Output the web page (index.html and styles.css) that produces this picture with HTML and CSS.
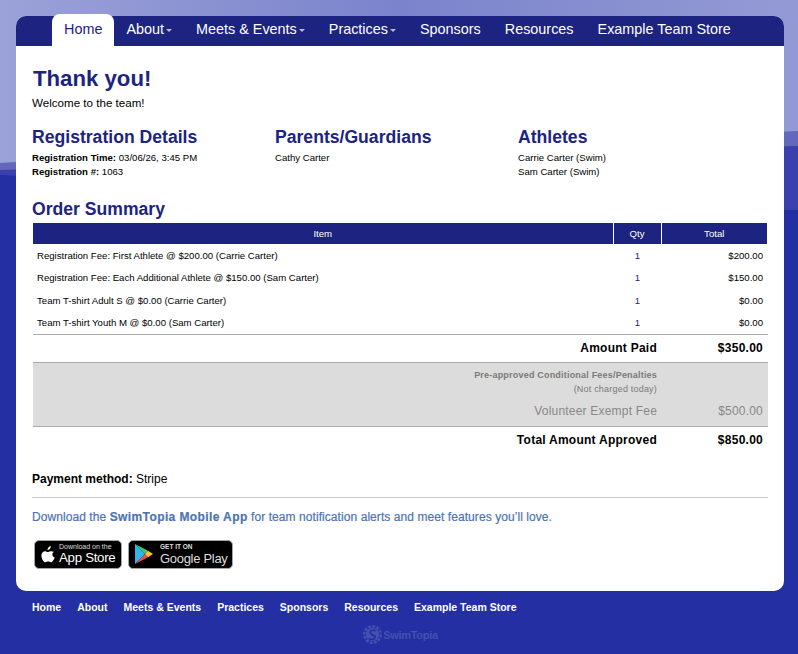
FILE: index.html
```html
<!DOCTYPE html>
<html lang="en">
<head>
<meta charset="utf-8">
<title>Thank you!</title>
<link rel="stylesheet" href="styles.css">
</head>
<body>
<div class="card">
  <nav class="topnav">
    <a class="tab active">Home</a>
    <a class="tab">About<span class="caret"></span></a>
    <a class="tab">Meets &amp; Events<span class="caret"></span></a>
    <a class="tab">Practices<span class="caret"></span></a>
    <a class="tab">Sponsors</a>
    <a class="tab">Resources</a>
    <a class="tab">Example Team Store</a>
  </nav>
  <main class="content">
    <h1 class="title">Thank you!</h1>
    <p class="welcome">Welcome to the team!</p>
    <section class="columns">
      <div>
        <h2 class="heading">Registration Details</h2>
        <p class="line"><b>Registration Time:</b> 03/06/26, 3:45 PM</p>
        <p class="line"><b>Registration #:</b> 1063</p>
      </div>
      <div>
        <h2 class="heading">Parents/Guardians</h2>
        <p class="line">Cathy Carter</p>
      </div>
      <div>
        <h2 class="heading">Athletes</h2>
        <p class="line">Carrie Carter (Swim)</p>
        <p class="line">Sam Carter (Swim)</p>
      </div>
    </section>
    <h2 class="heading order-heading">Order Summary</h2>
    <table class="order">
      <colgroup><col class="col-item"><col class="col-qty"><col class="col-total"></colgroup>
      <thead>
        <tr><th>Item</th><th class="th-sep">Qty</th><th class="th-sep th-last">Total</th></tr>
      </thead>
      <tbody>
        <tr class="row"><td>Registration Fee: First Athlete @ $200.00 (Carrie Carter)</td><td class="qty">1</td><td class="money">$200.00</td></tr>
        <tr class="row"><td>Registration Fee: Each Additional Athlete @ $150.00 (Sam Carter)</td><td class="qty">1</td><td class="money">$150.00</td></tr>
        <tr class="row"><td>Team T-shirt Adult S @ $0.00 (Carrie Carter)</td><td class="qty">1</td><td class="money">$0.00</td></tr>
        <tr class="row"><td>Team T-shirt Youth M @ $0.00 (Sam Carter)</td><td class="qty">1</td><td class="money">$0.00</td></tr>
      </tbody>
      <tbody>
        <tr class="sum paid"><td colspan="2">Amount Paid</td><td class="sum-value">$350.00</td></tr>
        <tr class="fees-note"><td colspan="2"><b>Pre-approved Conditional Fees/Penalties</b><br>(Not charged today)</td><td></td></tr>
        <tr class="fees-row"><td colspan="2">Volunteer Exempt Fee</td><td class="sum-value">$500.00</td></tr>
        <tr class="sum approved"><td colspan="2">Total Amount Approved</td><td class="sum-value">$850.00</td></tr>
      </tbody>
    </table>
    <p class="payment"><b>Payment method:</b> Stripe</p>
    <hr class="rule">
    <p class="promo">Download the <b>SwimTopia Mobile App</b> for team notification alerts and meet features you’ll love.</p>
    <div class="badges">
      <div class="badge apple">
        <svg class="apple-logo" viewBox="0 0 16 19" width="14" height="17" aria-hidden="true"><path fill="#fff" d="M11.2 0c.1 1.2-.3 2.2-1 3-.7.8-1.700 1.400-2.800 1.300-.1-1.100.4-2.200 1-2.900C9.100.6 10.300 0 11.200 0zM14.900 6.400c-1 .6-1.900 1.600-1.900 3.100 0 1.800 1.200 2.900 2.600 3.500-.3.9-.7 1.800-1.300 2.700-.8 1.200-1.600 2.600-3 2.600-1.300 0-1.700-.8-3.200-.8-1.600 0-2 .8-3.200.8-1.300 0-2.200-1.300-3-2.500C.6 13.600-.2 10.300 1.100 8 1.800 6.700 3.100 5.800 4.500 5.800c1.300 0 2.300.9 3.100.9.800 0 1.900-1 3.400-1 1.300 0 2.800.7 3.900.7z"/></svg>
        <div class="badge-text">
          <span class="badge-small">Download on the</span>
          <span class="badge-big">App Store</span>
        </div>
      </div>
      <div class="badge google">
        <svg class="play-logo" viewBox="0 0 20 22" width="18" height="20" aria-hidden="true">
          <polygon fill="#2bb6f0" points="0,0 0,22 11,11"/>
          <polygon fill="#3fc66f" points="0,0 14.500,7.500 11,11"/>
          <polygon fill="#ef4a4f" points="0,22 14.500,14.500 11,11"/>
          <polygon fill="#fbc02d" points="14.500,7.500 20,11 14.500,14.500 11,11"/>
        </svg>
        <div class="badge-text">
          <span class="badge-small caps">GET IT ON</span>
          <span class="badge-big gp">Google Play</span>
        </div>
      </div>
    </div>
  </main>
</div>
<footer class="foot">
  <nav class="footnav">
    <a>Home</a><a>About</a><a>Meets &amp; Events</a><a>Practices</a><a>Sponsors</a><a>Resources</a><a>Example Team Store</a>
  </nav>
  <div class="brand">
    <svg viewBox="0 0 20 20" width="19" height="19" aria-hidden="true">
      <circle cx="10" cy="10" r="7" fill="#4650b0"/>
      <circle cx="10" cy="10" r="8.700" fill="none" stroke="#4650b0" stroke-width="2.600" stroke-dasharray="3 1.500"/>
      <path d="M13.500 6C10 4.500 6.500 6 8 8.800s5.500 1.400 4.500 4.400-4.500 2.300-6.500 1" fill="none" stroke="#2430a3" stroke-width="2"/>
    </svg>
    <span class="brand-name">SwimTopia</span>
  </div>
</footer>
</body>
</html>
```
FILE: styles.css
```css
* { box-sizing: border-box; }
html, body { margin: 0; height: 654px; overflow: hidden; }
body {
  padding-top: 16px;
  font-family: "Liberation Sans", Arial, sans-serif;
  color: #000;
  background-color: #232fa3;
  background-image: url("data:image/svg+xml,%3Csvg xmlns='http://www.w3.org/2000/svg' width='798' height='230'%3E%3Cdefs%3E%3ClinearGradient id='a' x1='0' x2='1' y1='0' y2='0'%3E%3Cstop offset='0' stop-color='%239ba2d8'/%3E%3Cstop offset='.5' stop-color='%237b83cc'/%3E%3Cstop offset='.97' stop-color='%239299d4'/%3E%3C/linearGradient%3E%3C/defs%3E%3Cpolygon fill='%233a40ae' points='0,165 798,140 798,210 0,210'/%3E%3Cpolygon fill='%23232fa3' points='0,175 798,212 798,230 0,230'/%3E%3Cpolygon fill='%236468bd' points='0,163 798,130 798,146 0,170'/%3E%3Cpolygon fill='url(%23a)' points='0,0 798,0 798,131 0,163'/%3E%3C/svg%3E");
  background-repeat: no-repeat;
}
.card {
  width: 768px;
  height: 575px;
  margin: 0 0 0 16px;
  background: #fff;
  border-radius: 10px;
}
.topnav {
  display: flex;
  height: 30px;
  padding-left: 36px;
  background: #1c2380;
  border-radius: 10px 10px 0 0;
}
.tab {
  display: block;
  height: 30px;
  padding: 0 12px;
  color: #fff;
  font-size: 14.400px;
  line-height: 27px;
  white-space: nowrap;
}
.tab.active {
  height: 32px;
  margin-top: -2px;
  padding-top: 2px;
  color: #1c2380;
  background: #fff;
  border-radius: 8px 8px 0 0;
}
.caret {
  display: inline-block;
  margin-left: 2px;
  vertical-align: middle;
  border-top: 3px solid #b9bbd8;
  border-left: 3px solid transparent;
  border-right: 3px solid transparent;
}
.content { padding: 18px 16px 0; }
.title {
  margin: 0 0 0 1px;
  color: #1c2380;
  font-size: 22.200px;
  line-height: 29px;
}
.welcome { margin: 3px 0 0; font-size: 11.600px; line-height: 14px; }
.columns {
  display: grid;
  grid-template-columns: 243px 243px 243px;
  margin-top: 16px;
}
.heading {
  margin: 0;
  color: #1c2380;
  font-size: 17.600px;
  line-height: 22px;
}
.line { margin: 0; font-size: 9.600px; line-height: 14px; }
.line:first-of-type { margin-top: 3px; }
.order-heading { margin-top: 19px; }
.order {
  width: 735px;
  margin: 3px 0 0 1px;
  border-collapse: collapse;
  table-layout: fixed;
  font-size: 9.600px;
}
.col-item { width: 580px; }
.col-qty { width: 48px; }
.col-total { width: 107px; }
.order th {
  height: 21px;
  padding: 0;
  background: #1c2380;
  color: #fff;
  font-size: 9.600px;
  font-weight: 400;
  text-align: center;
}
.th-sep { border-left: 1px solid #fff; }
.th-last { border-right: 2px solid #fff; }
.row td { height: 22.500px; padding: 0 4px; }
.row .qty { padding: 0 0 0 1px; text-align: center; color: #1c2380; }
.row .money { text-align: right; padding-right: 5px; }
.sum td, .fees-row td, .fees-note td { text-align: right; padding: 0 5px 0 0; }
.sum td:first-child, .fees-row td:first-child, .fees-note td:first-child { padding-right: 4px; }
.sum td { height: 27px; font-size: 12px; font-weight: 700; letter-spacing: .25px; }
.paid td { height: 28px; border-top: 1px solid #aaa; border-bottom: 1px solid #aaa; }
.approved td { border-top: 1px solid #aaa; }
.fees-note td {
  background: #dcdcdc;
  color: #7a7a7a;
  font-size: 9px;
  line-height: 14px;
  padding-top: 5px;
  letter-spacing: .2px;
}
.fees-row td {
  height: 31px;
  background: #dcdcdc;
  color: #888;
  font-size: 12px;
  letter-spacing: .2px;
}
.payment { margin: 18px 0 0; font-size: 12px; line-height: 14px; }
.rule { margin: 11px 0 0; border: 0; border-top: 1px solid #ccc; }
.promo {
  margin: 13px 0 0;
  color: #4d74b3;
  font-size: 12px;
  line-height: 13px;
  letter-spacing: .07px;
  -webkit-text-stroke: .2px #4d74b3;
}
.promo b { letter-spacing: .4px; }
.badges { display: flex; gap: 6px; margin: 16px 0 0 2px; }
.badge {
  display: flex;
  align-items: center;
  height: 29px;
  background: #000;
  border: 1px solid #a6a6a6;
  border-radius: 5px;
  color: #fff;
}
.apple { width: 88px; padding-left: 6px; gap: 4px; }
.google { width: 105px; padding-left: 6px; gap: 7px; }
.badge-text { display: flex; flex-direction: column; white-space: nowrap; }
.badge-small { font-size: 7px; line-height: 8px; color: #ddd; }
.badge-big { font-size: 13.300px; line-height: 14px; letter-spacing: -.3px; }
.badge-small.caps { font-size: 6.500px; font-weight: 700; }
.badge-big.gp { font-size: 13px; line-height: 15px; color: #ddd; }
.foot { width: 736px; margin: 0 0 0 32px; }
.footnav { display: flex; gap: 16px; padding-top: 10px; }
.footnav a { color: #fff; font-size: 10.500px; line-height: 13px; font-weight: 700; white-space: nowrap; }
.brand {
  display: flex;
  align-items: center;
  justify-content: center;
  gap: 1px;
  margin-top: 11px;
  margin-left: 1px;
}
.brand-name { color: #4650b0; font-size: 11px; font-weight: 700; letter-spacing: -.3px; }
```
